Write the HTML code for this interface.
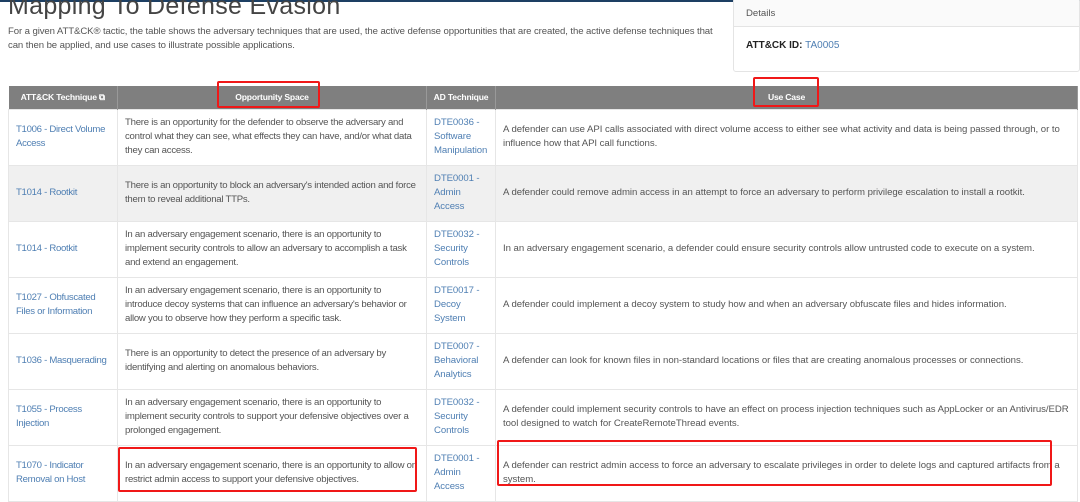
<!DOCTYPE html>
<html><head><meta charset="utf-8"><style>
*{margin:0;padding:0;box-sizing:border-box}
body{width:1080px;height:492px;overflow:hidden;background:#fff;font-family:"Liberation Sans",sans-serif;color:#555;position:relative}
.top{position:absolute;left:0;top:0;width:1080px;height:2px;background:#1d3f63}
h1{position:absolute;left:8px;top:-8px;font-size:25px;font-weight:300;color:#444;letter-spacing:0.3px}
.intro{position:absolute;left:8px;top:25px;width:715px;font-size:9.6px;line-height:14px;color:#555;letter-spacing:-0.1px}
.det{position:absolute;left:733px;top:-2px;width:347px;height:74px;border:1px solid #e4e4e4;border-radius:3px}
.det .h{height:28px;border-bottom:1px solid #e4e4e4;padding:9px 0 0 12px;font-size:9.6px;color:#555;background:#fafafa}
.det .b{padding:13px 0 0 12px;font-size:10px;color:#222}
a{color:#4f7fb3;text-decoration:none}
table{position:absolute;left:8px;top:86px;width:1070px;border-collapse:collapse;table-layout:fixed;font-size:9.6px;line-height:14px;letter-spacing:-0.3px}
th{background:#7f7f7f;color:#fff;font-size:8.6px;font-weight:bold;height:23px;border-right:1px solid #999;letter-spacing:-0.2px}
td{height:56px;border:1px solid #e6e6e6;padding:0 7px;vertical-align:middle;color:#555}
td:nth-child(2){letter-spacing:-0.25px}
td:nth-child(3){letter-spacing:-0.1px}
td:nth-child(4){letter-spacing:-0.04px}
tr.g td{background:#f0f0f0}
.rb{position:absolute;border:2px solid #f01818;border-radius:2px}
</style></head><body>
<div class="top"></div>
<h1>Mapping To Defense Evasion</h1>
<div class="intro">For a given ATT&amp;CK® tactic, the table shows the adversary techniques that are used, the active defense opportunities that are created, the active defense techniques that can then be applied, and use cases to illustrate possible applications.</div>
<div class="det"><div class="h">Details</div><div class="b"><b>ATT&amp;CK ID:</b> <a>TA0005</a></div></div>
<table>
<colgroup><col style="width:109px"><col style="width:309px"><col style="width:69px"><col></colgroup>
<tr><th>ATT&amp;CK Technique ⧉</th><th>Opportunity Space</th><th>AD Technique</th><th>Use Case</th></tr>
<tr><td><a>T1006 - Direct Volume Access</a></td><td>There is an opportunity for the defender to observe the adversary and control what they can see, what effects they can have, and/or what data they can access.</td><td><a>DTE0036 - Software Manipulation</a></td><td>A defender can use API calls associated with direct volume access to either see what activity and data is being passed through, or to influence how that API call functions.</td></tr>
<tr class="g"><td><a>T1014 - Rootkit</a></td><td>There is an opportunity to block an adversary's intended action and force them to reveal additional TTPs.</td><td><a>DTE0001 - Admin Access</a></td><td>A defender could remove admin access in an attempt to force an adversary to perform privilege escalation to install a rootkit.</td></tr>
<tr><td><a>T1014 - Rootkit</a></td><td>In an adversary engagement scenario, there is an opportunity to implement security controls to allow an adversary to accomplish a task and extend an engagement.</td><td><a>DTE0032 - Security Controls</a></td><td>In an adversary engagement scenario, a defender could ensure security controls allow untrusted code to execute on a system.</td></tr>
<tr><td><a>T1027 - Obfuscated Files or Information</a></td><td>In an adversary engagement scenario, there is an opportunity to introduce decoy systems that can influence an adversary's behavior or allow you to observe how they perform a specific task.</td><td><a>DTE0017 - Decoy System</a></td><td>A defender could implement a decoy system to study how and when an adversary obfuscate files and hides information.</td></tr>
<tr><td><a>T1036 - Masquerading</a></td><td>There is an opportunity to detect the presence of an adversary by identifying and alerting on anomalous behaviors.</td><td><a>DTE0007 - Behavioral Analytics</a></td><td>A defender can look for known files in non-standard locations or files that are creating anomalous processes or connections.</td></tr>
<tr><td><a>T1055 - Process Injection</a></td><td>In an adversary engagement scenario, there is an opportunity to implement security controls to support your defensive objectives over a prolonged engagement.</td><td><a>DTE0032 - Security Controls</a></td><td>A defender could implement security controls to have an effect on process injection techniques such as AppLocker or an Antivirus/EDR tool designed to watch for CreateRemoteThread events.</td></tr>
<tr><td><a>T1070 - Indicator Removal on Host</a></td><td>In an adversary engagement scenario, there is an opportunity to allow or restrict admin access to support your defensive objectives.</td><td><a>DTE0001 - Admin Access</a></td><td>A defender can restrict admin access to force an adversary to escalate privileges in order to delete logs and captured artifacts from a system.</td></tr>
</table>
<div class="rb" style="left:217px;top:81px;width:103px;height:27px"></div>
<div class="rb" style="left:753px;top:77px;width:66px;height:30px"></div>
<div class="rb" style="left:118px;top:447px;width:299px;height:45px"></div>
<div class="rb" style="left:497px;top:440px;width:555px;height:46px"></div>
</body></html>
